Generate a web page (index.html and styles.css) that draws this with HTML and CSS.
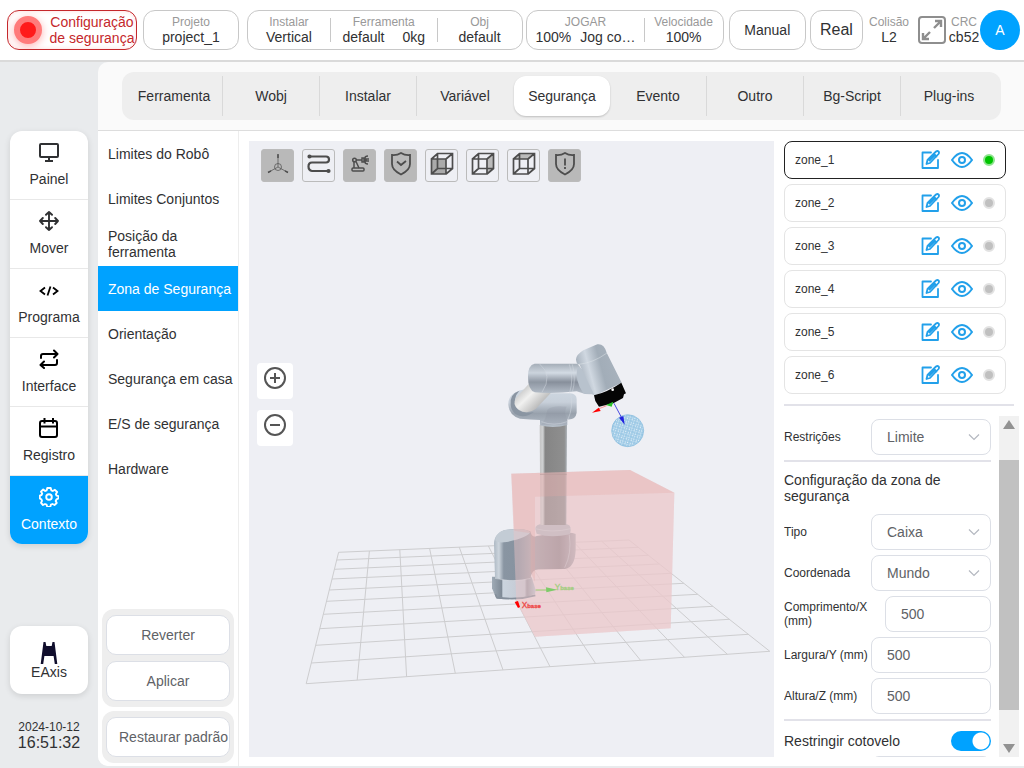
FILE: index.html
```html
<!DOCTYPE html>
<html lang="pt">
<head>
<meta charset="utf-8">
<title>Zona de Segurança</title>
<link rel="stylesheet" href="styles.css">
</head>
<body>
<svg class="defs" width="0" height="0" aria-hidden="true">
  <symbol id="edit" viewBox="0 0 20 20"><g fill="none" stroke="currentColor" stroke-width="1.8" stroke-linejoin="round" stroke-linecap="round"><path d="M10 2.500H1.500v15.500h15.500V10"/><path d="M5.500 14l1-4L15 1.500q1.500-1 2.500 0t0 2.500L9 13zM13 4l2.500 2.500M8.500 10.500l5-5"/></g></symbol>
  <symbol id="eye" viewBox="0 0 22 18"><g fill="none" stroke="currentColor" stroke-width="2"><path d="M1 9Q11-5 21 9Q11 23 1 9z"/><circle cx="11" cy="9" r="3"/></g></symbol>
  <symbol id="chevron" viewBox="0 0 12 8"><path d="M1 1.500l5 5 5-5" fill="none" stroke="currentColor" stroke-width="1.200"/></symbol>
  <symbol id="cube" viewBox="0 0 24 24"><path d="M1.500 7h14.500v15H1.500zM1.500 7l6-5.500H22.500v15L16 22M16 7l6.500-5.500M7.500 1.500v15h15M7.500 16.500l-6 5.500" fill="none" stroke="currentColor" stroke-width="1.700"/></symbol>
</svg>

<header class="topbar">
  <button class="pill status"><span class="lamp"></span><span>Configuração de segurança</span></button>
  <button class="pill project"><span class="stat"><small>Projeto</small><b>project_1</b></span></button>
  <div class="pill install">
    <span class="stat cell-a"><small>Instalar</small><b>Vertical</b></span>
    <span class="stat cell-b"><small>Ferramenta</small><b class="pair"><span>default</span><span>0kg</span></b></span>
    <span class="stat cell-c"><small>Obj</small><b>default</b></span>
  </div>
  <div class="pill jog">
    <span class="stat cell-d"><small>JOGAR</small><b class="pair close"><span>100%</span><span>Jog co…</span></b></span>
    <span class="stat cell-e"><small>Velocidade</small><b>100%</b></span>
  </div>
  <button class="pill manual">Manual</button>
  <button class="pill real">Real</button>
  <span class="stat collision"><small>Colisão</small><b>L2</b></span>
  <button class="expand" aria-label="Tela cheia"><svg width="28" height="28" viewBox="0 0 28 28" fill="none" stroke="#8e8e8e" stroke-width="2"><rect x="1" y="1" width="26" height="26" rx="3"/><path d="M16 12l7-7M17 5h6v6M12 16l-7 7M5 17v6h6" stroke-width="2.400"/></svg></button>
  <span class="stat crc"><small>CRC</small><b>cb52</b></span>
  <button class="avatar">A</button>
</header>

<div class="shell">
  <aside class="rail">
    <nav class="nav">
      <a href="#"><svg width="20" height="20" viewBox="0 0 20 20" fill="none" stroke="currentColor" stroke-width="2"><rect x="1" y="2" width="18" height="13" rx="1"/><path d="M10 15v3M6 19h8"/></svg>Painel</a>
      <a href="#"><svg width="20" height="20" viewBox="0 0 20 20" fill="none" stroke="currentColor" stroke-width="1.900" stroke-linecap="round" stroke-linejoin="round"><path d="M10 1v18M1 10h18M7 3.800L10 1l3 2.800M7 16.200L10 19l3-2.800M3.800 7L1 10l2.800 3M16.200 7L19 10l-2.800 3"/></svg>Mover</a>
      <a href="#" class="dark"><svg width="20" height="20" viewBox="0 0 20 20" fill="none" stroke="currentColor" stroke-width="1.800"><path d="M6 7.500L1.500 11 6 14.500M14 7.500l4.500 3.500-4.500 3.500M11.500 6.500l-3 9"/></svg>Programa</a>
      <a href="#" class="dark"><svg width="20" height="20" viewBox="0 0 20 20" fill="none" stroke="currentColor" stroke-width="2" stroke-linecap="round" stroke-linejoin="round"><path d="M2 9V7q0-2 2-2h14M15 1.500L18.500 5 15 8.500M18 11v3q0 2-2 2H2M5 12.500L1.500 16 5 19"/></svg>Interface</a>
      <a href="#" class="dark"><svg width="20" height="20" viewBox="0 0 20 20" fill="none" stroke="currentColor" stroke-width="2"><rect x="1" y="3" width="17" height="16" rx="2"/><path d="M1 8.500h17M5.500 0v5.500M14 0v5.500"/></svg>Registro</a>
      <a href="#" class="on"><svg width="20" height="20" viewBox="0 0 20 20" fill="none" stroke="currentColor" stroke-width="1.900" stroke-linejoin="round"><path d="M8.300 1h3.400l.6 2.300 1.500.7 2.100-1.200 2.200 2.200-1.200 2.100.6 1.500 2 .6v2.200l-2 .9-.8 1.700 1 2-2.200 2-2-1-1.600.7-.7 2.300H8.300l-.7-2.300L6 17l-2 1-2-2.200 1-2-.6-1.500L.8 11.500V8.700L2.500 8l.7-1.500L2 4.700l2.200-2.200L6.200 4l1.500-.7z"/><circle cx="10" cy="10" r="2.800"/></svg>Contexto</a>
    </nav>
    <a href="#" class="axis"><svg width="18" height="22" viewBox="0 0 18 22" fill="#100e2c"><path d="M3.500 0h2l.8 4h5.400l.8-4h2l2.800 22h-2.500l-1.200-8H4.400l-1.200 8H.7z"/></svg>EAxis</a>
    <div class="clock"><span class="date">2024-10-12</span><span class="time">16:51:32</span></div>
  </aside>

  <main class="panel">
    <div class="tabrow"><nav class="tabs">
      <a href="#">Ferramenta</a><a href="#">Wobj</a><a href="#">Instalar</a><a href="#" class="flat">Variável</a><a href="#" class="on">Segurança</a><a href="#">Evento</a><a href="#">Outro</a><a href="#">Bg-Script</a><a href="#" class="flat">Plug-ins</a>
    </nav></div>

    <div class="work">
      <div class="side">
        <nav class="submenu">
          <a href="#">Limites do Robô</a>
          <a href="#">Limites Conjuntos</a>
          <a href="#">Posição da ferramenta</a>
          <a href="#" class="on">Zona de Segurança</a>
          <a href="#">Orientação</a>
          <a href="#">Segurança em casa</a>
          <a href="#">E/S de segurança</a>
          <a href="#">Hardware</a>
        </nav>
        <div class="actions">
          <div class="group"><button>Reverter</button><button>Aplicar</button></div>
          <div class="group"><button class="reset">Restaurar padrão</button></div>
        </div>
      </div>

      <section class="view">
        <svg class="scene" viewBox="249 141 525 616" role="img" aria-label="Robô e zona de segurança">
          <defs>
            <linearGradient id="tube"><stop offset="0" stop-color="#c4c4c4"/><stop offset=".12" stop-color="#cfd1d2"/><stop offset=".2" stop-color="#858585"/><stop offset=".9" stop-color="#8f8f8f"/><stop offset="1" stop-color="#aab0b6"/></linearGradient>
            <linearGradient id="across" x2="0" y2="1"><stop offset="0" stop-color="#a3acb6"/><stop offset=".3" stop-color="#d3dbe4"/><stop offset=".6" stop-color="#878f9b"/><stop offset="1" stop-color="#b9c2cd"/></linearGradient>
            <linearGradient id="body"><stop offset="0" stop-color="#aeb9c4"/><stop offset=".06" stop-color="#cdd5dd"/><stop offset=".12" stop-color="#8995a2"/><stop offset=".3" stop-color="#8793a0"/><stop offset=".45" stop-color="#a9a4ab"/><stop offset=".8" stop-color="#958b92"/><stop offset="1" stop-color="#b9b2b9"/></linearGradient>
            <linearGradient id="head" x1="0" y1=".6" x2="1" y2=".3"><stop offset="0" stop-color="#9aa5b1"/><stop offset=".3" stop-color="#d0d8e1"/><stop offset=".55" stop-color="#a2adb8"/><stop offset="1" stop-color="#a9b3be"/></linearGradient>
            <linearGradient id="bone" x1="0" y1="0" x2="1" y2=".8"><stop offset=".1" stop-color="#b7b7b7"/><stop offset=".45" stop-color="#f1f1f0"/><stop offset=".9" stop-color="#aaa"/></linearGradient>
            <linearGradient id="foot"><stop offset="0" stop-color="#a0abb6"/><stop offset=".22" stop-color="#7f8a96"/><stop offset=".25" stop-color="#cbd4de"/><stop offset=".75" stop-color="#c3c8d2"/><stop offset=".8" stop-color="#9a9ba5"/><stop offset="1" stop-color="#c0c8d2"/></linearGradient>
            <linearGradient id="elbow" x2="0" y2="1"><stop offset="0" stop-color="#cfd8e2"/><stop offset=".35" stop-color="#c8d0da"/><stop offset=".65" stop-color="#98a1ac"/><stop offset="1" stop-color="#b7c0cb"/></linearGradient>
            <pattern id="mesh" width="15" height="15" patternUnits="userSpaceOnUse" patternTransform="rotate(17)"><rect width="15" height="15" fill="#9bc8e5"/><path d="M2 2l5 1-4 4zM9 1l5 4-5 2zM1 10l4-3 2 7zM9 9l5 2-4 3z" fill="#e6f2fa"/></pattern>
          </defs>
          <g class="floor">
            <path d="M338.600 552.300L306.200 683.700M369.400 551L357.200 680.100M399.800 549.700L406.600 676.700M429.600 548.400L455.300 673.300M459.300 547.200L503 669.900M488.400 546L550 666.700M517.500 544.700L595.600 663.500M545.900 543.500L640.500 660.300M573.900 542.300L684.500 657.300M601.700 541.200L727.400 654.300M629 540L769.800 651.300"/>
            <path d="M338.600 552.300L629 540M336.700 560L638.200 547.300M334.400 569.300L648.400 555.300M332 579L659.400 564M329.300 590L671.100 573.300M326.500 601.300L683.800 583.300M323.300 614.300L697.700 594.300M319.800 628.700L712.900 606.300M315.700 645.300L729.300 619.300M311.300 663L748.300 634.300M306.200 683.700L769.800 651.300"/>
          </g>
          <g transform="translate(470 330) scale(.33333)">
            <path d="M124 431L480 420 613 488 602 895 195 920 139 815z" fill="#ebcfd2" opacity=".6"/>
            <path d="M66 740L185 742 197 780 195 792Q145 812 80 806L76 798 66 775z" fill="url(#foot)"/>
            <path d="M76 792l4 10q60 10 116-6" fill="none" stroke="#858f9b" stroke-width="5"/>
            <path d="M72 640Q74 605 110 600Q150 592 181 604Q186 625 200 618Q300 600 317 612V660Q315 712 285 717L205 718Q184 720 182 745Q130 757 75 745z" fill="url(#body)"/>
            <path d="M76 630Q80 598 125 598Q165 594 181 606Q175 622 110 636Q80 640 76 630z" fill="#c3ccd5"/>
            <path d="M196 596Q196 582 220 582H285Q303 582 302 600L300 613Q240 625 200 611z" fill="#b9bbc2"/>
            <path d="M196 596q50 14 106 0M298 615q8 55-14 98M75 745q55 14 107 0" fill="none" stroke="#d6dbe1" stroke-width="1.500"/>
            <path d="M209 285H291L289 585H211z" fill="url(#tube)"/>
            <path d="M210 433h80" stroke="#696969" stroke-width="2"/>
            <path d="M115 225Q113 183 175 176L210 190H300Q320 192 320 208V248Q317 270 292 268V285Q250 296 210 286V270Q180 268 150 266Q118 257 115 225z" fill="url(#elbow)"/>
            <path d="M232 240Q245 225 290 230Q280 245 292 270L290 286H212Q228 270 232 240z" fill="#858e9a" opacity=".2"/>
            <path d="M122 225Q118 192 148 182Q125 207 141 236Q160 253 192 246Q162 268 136 252Q124 242 122 225z" fill="#8a95a2"/>
            <path d="M176 162L243 188 197 237Q172 255 146 239Q125 224 138 204z" fill="url(#bone)"/>
            <path d="M174 140Q174 105 194 101H322L373 163 361 193 345 192 320 184Q250 192 195 187Q174 180 174 140z" fill="url(#across)"/>
            <path d="M174 140Q174 105 194 101L222 103Q236 141 221 187L195 187Q174 180 174 140z" fill="#b1bac5" opacity=".2"/>
            <path d="M208 101q42 35 8 86M298 103q14 44 1 85M307 103q12 44 0 83M302 192q8 40-8 76M214 275q38 15 77 0" fill="none" stroke="#d3d9e0" stroke-width="1.500"/>
            <path d="M323 110Q312 148 340 190L365 193 380 198 360 130z" fill="#b8c2cd"/>
            <path d="M318 88Q319 74 340 61L382 43Q402 40 410 68L455 158 374 197 328 103Q319 105 318 88z" fill="url(#head)"/>
            <path d="M326 103Q369 99 411 69" fill="none" stroke="#dfe4e9" stroke-width="1.500"/>
            <path d="M372 196L376 213 387 230 430 220 459 204 462 193 468 190 454 158Q413 186 372 196z" fill="#050505"/><circle cx="428" cy="179" r="4" fill="#fff"/>
            <path d="M430 215L408 225 425 230z" fill="#2bc42b"/><path d="M410 227l-25 10" stroke="#f66" stroke-width="2"/><path d="M366 248L386 233 392 243z" fill="#f00"/>
            <circle cx="473" cy="302" r="48" fill="url(#mesh)" stroke="#83b9dc" stroke-width="2"/>
            <path d="M432 220L457 267" stroke="#4848e0" stroke-width="3"/><path d="M447 263l13-5 4 26z" fill="#2323e0"/>
            <path d="M124 431L480 420 613 488 602 895 195 920 139 815z" fill="#ebc5c7" opacity=".46"/>
            <path d="M124 431L480 420 613 488 195 500V755L182 725V610L133 602z" fill="#e3aaa7" opacity=".3"/>
            <path d="M197 780h34" stroke="#9bd070" stroke-width="3"/><path d="M228 772l34 7-33 8z" fill="#7ecb69"/>
            <path d="M134 816l10-3 6 18-6 3z" fill="#f00"/>
            <text class="axis-y" x="254" y="779">Y<tspan class="tiny">base</tspan></text>
            <text class="axis-x" x="155" y="835">X<tspan class="tiny">base</tspan></text>
          </g>
        </svg>
        <div class="tools">
          <button class="fill" aria-label="Eixos"><svg width="24" height="24" viewBox="0 0 24 24" fill="none" stroke="currentColor" stroke-width=".7"><circle cx="12" cy="15" r="3.500"/><path d="M12 3v12L2 20.500M12 15l10 5.500"/><path d="M12 2v4M2 20.500l3-1.700M22 20.500l-3-1.700" stroke-width="1.500"/></svg></button>
          <button aria-label="Trajetória"><svg width="24" height="24" viewBox="0 0 24 24" fill="none" stroke="currentColor" stroke-width="2.200"><path d="M3 4.500h16q3 0 3 3t-3 3H5q-3.500 0-3.500 4T5 19h16"/><circle cx="2.500" cy="4.500" r="1" fill="currentColor"/><circle cx="21.500" cy="19" r="1" fill="currentColor"/></svg></button>
          <button class="fill" aria-label="Robô"><svg width="24" height="24" viewBox="0 0 24 24" fill="none" stroke="currentColor" stroke-width="1.500"><rect x="4" y="16" width="12" height="3" rx="1"/><circle cx="6.500" cy="8" r="1.800"/><path d="M6 10v6M8 9.500l3 6.500M8.500 8H14M14 6v4h2V6zM20 4q-3 0-3 2v4q0 2 3 2M21 7h-3v2h3"/></svg></button>
          <button class="fill" aria-label="Segurança ativa"><svg width="24" height="24" viewBox="0 0 24 24" fill="none" stroke="currentColor" stroke-width="1.800"><path d="M3 3q5 .5 9-2 4 2.500 9 2v9q0 6-9 10.500Q3 18 3 12z"/><path d="M8 9.500l4 3.500 5-4"/></svg></button>
          <button aria-label="Vista frontal"><svg width="24" height="24"><path d="M2 7h14v15H2z" fill="#aaa"/><use href="#cube"/></svg></button>
          <button aria-label="Vista lateral"><svg width="24" height="24"><path d="M16 7l6-5v15l-6 5z" fill="#bbb"/><use href="#cube"/></svg></button>
          <button aria-label="Vista superior"><svg width="24" height="24"><path d="M2 7l6-5h14l-6 5z" fill="#bbb"/><use href="#cube"/></svg></button>
          <button class="fill" aria-label="Aviso"><svg width="24" height="24" viewBox="0 0 24 24" fill="none" stroke="currentColor" stroke-width="1.800"><path d="M3 3q5 .5 9-2 4 2.500 9 2v9q0 6-9 10.500Q3 18 3 12z"/><path d="M12 6.500v7M12 15v2"/></svg></button>
        </div>
        <div class="zoom">
          <button aria-label="Aproximar"><svg width="24" height="24" viewBox="0 0 24 24" fill="none" stroke="#555" stroke-width="2"><circle cx="12" cy="12" r="10"/><path d="M7 12h10M12 7v10"/></svg></button>
          <button aria-label="Afastar"><svg width="24" height="24" viewBox="0 0 24 24" fill="none" stroke="#555" stroke-width="2"><circle cx="12" cy="12" r="10"/><path d="M7 12h10"/></svg></button>
        </div>
      </section>

      <section class="props">
        <ul class="zones">
          <li class="on"><span>zone_1</span><button aria-label="Editar"><svg width="20" height="20"><use href="#edit"/></svg></button><button aria-label="Ver"><svg width="22" height="18"><use href="#eye"/></svg></button><i></i></li>
          <li><span>zone_2</span><button aria-label="Editar"><svg width="20" height="20"><use href="#edit"/></svg></button><button aria-label="Ver"><svg width="22" height="18"><use href="#eye"/></svg></button><i></i></li>
          <li><span>zone_3</span><button aria-label="Editar"><svg width="20" height="20"><use href="#edit"/></svg></button><button aria-label="Ver"><svg width="22" height="18"><use href="#eye"/></svg></button><i></i></li>
          <li><span>zone_4</span><button aria-label="Editar"><svg width="20" height="20"><use href="#edit"/></svg></button><button aria-label="Ver"><svg width="22" height="18"><use href="#eye"/></svg></button><i></i></li>
          <li><span>zone_5</span><button aria-label="Editar"><svg width="20" height="20"><use href="#edit"/></svg></button><button aria-label="Ver"><svg width="22" height="18"><use href="#eye"/></svg></button><i></i></li>
          <li><span>zone_6</span><button aria-label="Editar"><svg width="20" height="20"><use href="#edit"/></svg></button><button aria-label="Ver"><svg width="22" height="18"><use href="#eye"/></svg></button><i></i></li>
        </ul>
        <hr class="wide">
        <div class="scroller">
          <form class="form">
            <div class="row"><label for="restr">Restrições</label><span class="select"><select id="restr"><option>Limite</option></select><svg width="12" height="8"><use href="#chevron"/></svg></span></div>
            <hr>
            <h2>Configuração da zona de segurança</h2>
            <div class="row"><label for="tipo">Tipo</label><span class="select"><select id="tipo"><option>Caixa</option></select><svg width="12" height="8"><use href="#chevron"/></svg></span></div>
            <div class="row"><label for="coord">Coordenada</label><span class="select"><select id="coord"><option>Mundo</option></select><svg width="12" height="8"><use href="#chevron"/></svg></span></div>
            <div class="row"><label for="lx" class="long">Comprimento/X (mm)</label><input id="lx" type="text" value="500"></div>
            <div class="row"><label for="ly">Largura/Y (mm)</label><input id="ly" type="text" value="500"></div>
            <div class="row"><label for="lz">Altura/Z (mm)</label><input id="lz" type="text" value="500"></div>
            <hr>
            <div class="row toggle"><label for="elbow-limit">Restringir cotovelo</label><input id="elbow-limit" class="switch" type="checkbox" checked></div>
            <div class="row"><label for="more"></label><input id="more" type="text" aria-label="Valor"></div>
          </form>
          <div class="bar" aria-hidden="true"><span class="up"></span><span class="thumb"></span><span class="down"></span></div>
        </div>
      </section>
    </div>
  </main>
</div>
</body>
</html>
```
FILE: styles.css
```css
* { box-sizing: border-box; }
body { margin: 0; height: 100vh; display: flex; flex-direction: column; overflow: hidden; background: #e9ebed; color: #303133; font: 14px/16px "Liberation Sans", Arial, sans-serif; }
button, input, select { font: inherit; color: inherit; }
button { padding: 0; border: 0; background: none; cursor: pointer; }
a { color: inherit; text-decoration: none; }
.defs { position: absolute; }

.topbar { display: flex; align-items: center; gap: 3px; height: 62px; flex: none; padding: 0 4px 0 7px; background: #fff; border-bottom: 2px solid #dadada; }
.pill { display: flex; align-items: center; justify-content: center; height: 40px; border: 1px solid #c8c8c8; border-radius: 12px; background: #fff; white-space: nowrap; }
.status { flex: 130 1 0; justify-content: flex-start; gap: 7px; border-color: #c5282c; color: #c5282c; white-space: normal; box-shadow: inset 0 0 4px #ffd9d9; overflow: hidden; }
.status span:last-child { width: 86px; flex: none; }
.lamp { width: 28px; height: 28px; flex: none; margin-left: 6px; border-radius: 50%; background: #ff1a1a; border: 6px solid #ff7b7b; box-shadow: 0 2px 8px #ffb0b0; }
.project { flex: 95 1 0; margin: 0 5px 0 3px; }
.install { flex: 278 1 0; }
.jog { flex: 199 1 0; }
.manual { flex: 76 1 0; margin-left: 2px; }
.real { flex: 52 1 0; margin-left: 1px; font-size: 16px; }
.stat { display: flex; flex-direction: column; align-items: center; line-height: 15px; }
.stat small { font-size: 12px; color: #999; }
.stat b { font-weight: 400; }
.pair { display: flex; gap: 18px; }
.pair.close { gap: 9px; }
.cell-a { flex: 83 1 0; }
.cell-b { flex: 108 1 0; }
.cell-c { flex: 85 1 0; }
.cell-d { flex: 118 1 0; }
.cell-e { flex: 79 1 0; }
.cell-b, .cell-c, .cell-e { position: relative; }
.cell-b::before, .cell-c::before, .cell-e::before { content: ""; position: absolute; left: 0; top: 3px; height: 24px; border-left: 1px solid #c8c8c8; }
.collision { width: 46px; }
.expand { display: flex; margin: 0 2px 0 3px; }
.crc { width: 26px; }
.avatar { width: 40px; height: 40px; flex: none; border-radius: 50%; background: #00a2ff; color: #fff; }

.shell { display: flex; flex: 1; min-height: 0; padding-bottom: 2px; }
.rail { width: 98px; flex: none; display: flex; flex-direction: column; padding: 69px 10px 15px; }
.nav, .axis { background: #fff; border-radius: 12px; box-shadow: 0 2px 6px #0000001f; }
.nav { overflow: hidden; }
.nav a { display: flex; flex-direction: column; align-items: center; height: 69px; padding-top: 11px; gap: 9px; border-bottom: 1px solid #e8e8e8; }
.nav svg { flex: none; }
.nav .dark svg { color: #000; }
.nav a.on { height: 68px; background: #00a2ff; color: #fff; border: 0; }
.axis { display: flex; flex-direction: column; align-items: center; height: 68px; padding-top: 16px; margin-top: auto; }
.clock { display: flex; flex-direction: column; align-items: center; margin-top: 25px; white-space: nowrap; }
.date { font-size: 12px; }
.time { font-size: 16px; line-height: 16px; }

.panel { flex: 1; min-width: 0; display: flex; flex-direction: column; background: #fafafa; border-radius: 10px 0 0 10px; overflow: hidden; }
.tabrow { padding: 10px 23px 10px 24px; border-bottom: 1px solid #ddd; }
.tabs { display: flex; padding: 4px 3px 4px 4px; background: #eee; border-radius: 12px; }
.tabs a { flex: 1; height: 40px; line-height: 40px; text-align: center; border-right: 1px solid #d9d9d9; }
.tabs .flat, .tabs .on { border-right-color: transparent; }
.tabs .on { border: 0; background: #fff; border-radius: 12px; box-shadow: 0 1px 2px #0003; }

.work { flex: 1; min-height: 0; display: flex; background: #fff; }
.side { width: 141px; flex: none; display: flex; flex-direction: column; border-right: 1px solid #ededed; }
.submenu a { display: flex; align-items: center; height: 45px; padding-left: 10px; }
.submenu .on { background: #00a2ff; color: #fff; }
.actions { margin-top: auto; padding: 0 4px 3px; display: grid; gap: 4px; }
.group { display: grid; gap: 6px; padding: 6px 4px; background: #eee; border-radius: 12px; }
.group button { height: 40px; background: #fff; border: 1px solid #dcdfe6; border-radius: 10px; color: #606266; overflow: hidden; white-space: nowrap; }
.group .reset { padding-left: 12px; text-align: left; }

.view { position: relative; flex: 1; min-width: 0; margin: 10px 0 9px 10px; background: #eeeff4; }
.scene { display: block; width: 100%; height: 100%; }
.floor { fill: none; stroke: #cdcdcf; stroke-width: 1; }
.axis-x, .axis-y { font: 25px "Liberation Sans", Arial, sans-serif; }
.axis-x { fill: #ee4c4c; stroke: #ee4c4c; }
.axis-y { fill: #a6cd83; stroke: #a6cd83; }
.tiny { font-size: 18px; font-weight: 700; }
.tools { position: absolute; left: 12px; top: 8px; display: flex; gap: 8px; }
.tools button { display: flex; justify-content: center; width: 33px; height: 33px; padding-top: 2px; border: 1px solid #bbb; border-radius: 3px; color: #4d4d4d; }
.tools .fill { background: #b9b9b9; }
.zoom { position: absolute; left: 8px; top: 222px; display: grid; gap: 11px; }
.zoom button { display: flex; justify-content: center; width: 36px; height: 36px; padding-top: 3px; background: #fff; border-radius: 4px; }

.props { width: 250px; flex: none; display: flex; flex-direction: column; padding: 10px 0 9px 10px; }
.zones { display: grid; gap: 5px; margin: 0 18px 0 0; padding: 0; list-style: none; font-size: 12px; }
.zones li { display: flex; align-items: center; gap: 10px; height: 38px; padding: 0 10px; border: 1px solid #e4e4e4; border-radius: 8px; }
.zones li.on { border-color: #222; }
.zones span { margin-right: auto; }
.zones button { display: flex; color: #22a0ea; }
.zones i { width: 12px; height: 12px; border-radius: 50%; background: #c0c0c0; border: 2px solid #e2e2e2; }
.zones .on i { background: #00c400; border-color: #8ee48e; }
hr { width: 100%; height: 2px; margin: 5px 0; border: 0; background: #e2e2e9; }
.wide { width: auto; flex: none; margin: 10px 10px 10px 0; }
.scroller { flex: 1; min-height: 0; display: flex; justify-content: space-between; padding-right: 5px; overflow: hidden; }
.form { width: 207px; padding-top: 3px; }
.row { display: flex; align-items: center; height: 36px; margin-bottom: 5px; font-size: 12px; line-height: 14px; }
.row label { width: 87px; flex: none; }
.row .long { width: 101px; }
.row input[type=text], .select select { width: 100%; min-width: 0; height: 36px; padding: 0 15px; border: 1px solid #dcdfe6; border-radius: 8px; background: #fff; color: #606266; font-size: 14px; appearance: none; outline: 0; }
.select { position: relative; flex: 1; }
.select svg { position: absolute; right: 11px; top: 14px; color: #b4b8c0; }
h2 { margin: 10px 0; font-size: 14px; line-height: 16px; font-weight: 400; }
.toggle { height: 30px; margin: 0; justify-content: space-between; }
.toggle label { width: auto; font-size: 14px; }
.switch { appearance: none; width: 40px; height: 20px; margin: 0; border-radius: 10px; background: radial-gradient(circle at 30px 10px, #fff 8px, #00a2ff 9px); }
.bar { width: 20px; display: flex; flex-direction: column; background: #f1f1f1; }
.up, .down { align-self: center; border: 6px solid transparent; }
.up { margin: -2px 0 0; border-bottom: 9px solid #929292; }
.thumb { flex: 1; margin: 31px 0 34px; background: #c1c1c1; }
.down { border-top: 9px solid #929292; margin-bottom: -2px; }
```
